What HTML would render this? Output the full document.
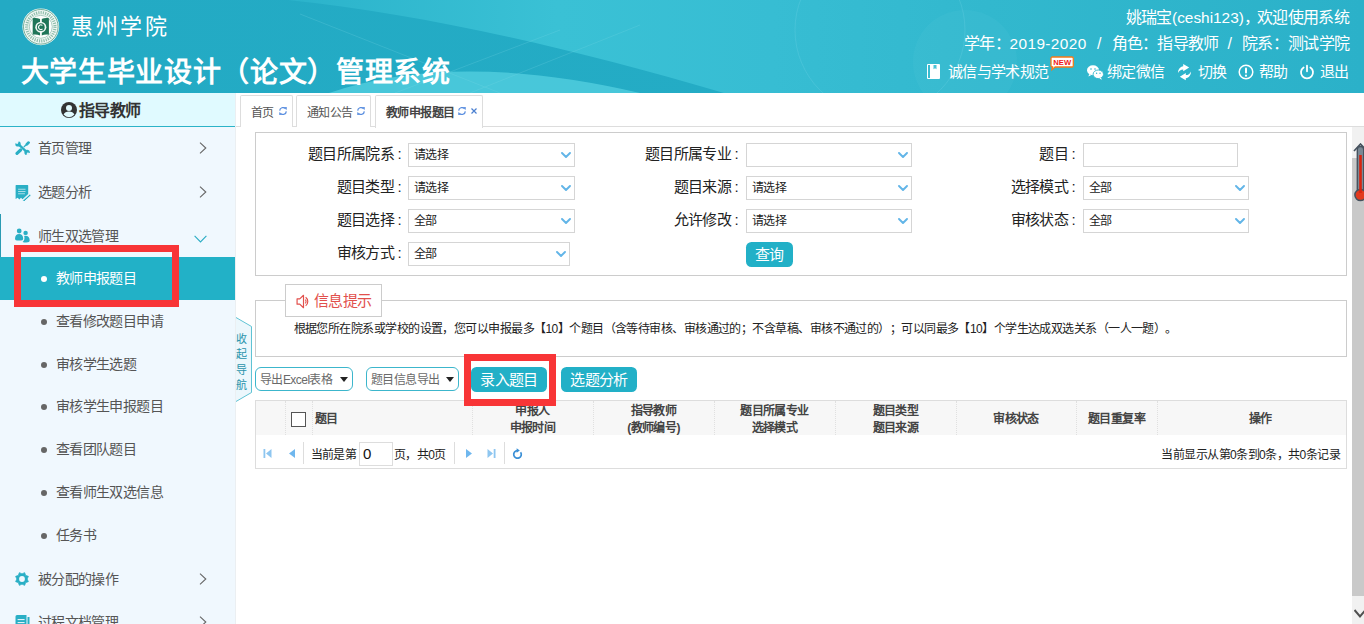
<!DOCTYPE html>
<html lang="zh-CN">
<head>
<meta charset="utf-8">
<title>大学生毕业设计(论文)管理系统</title>
<style>
*{box-sizing:border-box;margin:0;padding:0}
html,body{width:1364px;height:624px;overflow:hidden;background:#fff}
body{font-family:"Liberation Sans",sans-serif;font-size:12px;color:#333;position:relative;text-spacing-trim:space-all;font-kerning:none}
.abs{position:absolute}
/* header */
#hd{position:absolute;left:0;top:0;width:1364px;height:93px;overflow:hidden;
 background:linear-gradient(90deg,#23aac4 0%,#24acc5 60%,#27aec7 100%)}
#hd .wave{position:absolute}
#logo{position:absolute;left:22.2px;top:8.4px;width:37.6px;height:37.6px}
#school{position:absolute;left:71px;top:13px;font-family:"Liberation Serif",serif;font-size:22px;line-height:28px;letter-spacing:2.6px;color:#fff;white-space:nowrap}
#title{position:absolute;left:20.5px;top:54px;font-size:28px;line-height:37px;font-weight:bold;color:#fff;white-space:nowrap;letter-spacing:0.68px}
.hr{position:absolute;right:15px;color:#fff;white-space:nowrap;text-align:right}
.hl{position:absolute;left:0;width:1364px;height:20px;letter-spacing:-.7px;font-size:16px;line-height:20px;color:#fff;white-space:nowrap}
#h3{position:absolute;left:0;top:0;width:1364px;height:93px;color:#fff}
.ht{top:61px;letter-spacing:-.7px;font-size:15px;line-height:22px;white-space:nowrap;color:#fff}
/* sidebar */
#side{position:absolute;left:0;top:93px;width:236px;height:531px;background:#f0f8fe;overflow:hidden;border-right:1px solid #ebeff2}
#sidehd{position:absolute;left:0;top:0;width:236px;height:34px;background:#e0faff;border-bottom:1px solid #2bb3c8;border-right:1px solid #2bb3c8;letter-spacing:-.7px;font-size:16px;font-weight:bold;color:#333;line-height:35px;white-space:nowrap}
.mi{position:absolute;left:0;width:235px;height:44px;line-height:44px;letter-spacing:-.64px;font-size:14px;color:#555;white-space:nowrap}
.mi .t{position:absolute;left:38px;top:0}
.mi svg.ic{position:absolute;left:14px;top:14px}
.mi svg.ar{position:absolute;left:199px;top:16px}
.si{position:absolute;left:0;width:235px;height:43px;line-height:43px;letter-spacing:-.64px;font-size:14px;color:#555;white-space:nowrap}
.si .t{position:absolute;left:56px;top:0}
.si .d{position:absolute;left:41px;top:19px;width:6px;height:6px;border-radius:50%;background:#666}
.si.on{background:#22b1c7;color:#fff}
.si.on .d{background:#fff}
/* tabs */
#tabs{position:absolute;left:236px;top:93px;width:1128px;height:34px;background:#fff;border-bottom:1px solid #ddd}
.tab{position:absolute;top:2px;height:32px;border:1px solid #ddd;border-bottom:none;background:#fff;letter-spacing:-.55px;font-size:12px;line-height:32px;color:#555;white-space:nowrap;border-radius:2px 2px 0 0}
.tab.on{height:33px;font-weight:bold;color:#444}
.tab .t{position:absolute;left:10px;top:1px}
.rf{position:absolute;top:11px}
/* red boxes */
.red{position:absolute;border:7px solid #f83537}
/* form */
#fbox{position:absolute;left:255px;top:132px;width:1092px;height:144px;border:1px solid #ccc;background:#fff}
.lb{position:absolute;letter-spacing:-.7px;font-size:15px;line-height:20px;color:#222;text-align:right;white-space:nowrap;width:160px}
.lb i{font-style:normal;margin-left:3.6px}
.sel{position:absolute;height:24px;border:1px solid #d5d5d5;background:#fff;letter-spacing:-.55px;font-size:12px;line-height:22px;color:#222;padding-left:5px;white-space:nowrap}
.sel svg{position:absolute;right:3px;top:8px}
.btn{position:absolute;background:#22b0c7;color:#fff;letter-spacing:-.7px;font-size:15px;text-align:center;border-radius:5.5px;white-space:nowrap}
/* info */
#ibox{position:absolute;left:255px;top:300px;width:1092px;height:57px;border:1px solid #ccc}
#ileg{position:absolute;left:285px;top:284px;width:97px;height:32.5px;border:1px solid #ccc;background:#fff;letter-spacing:-.7px;font-size:15px;line-height:31px;color:#e2504c;white-space:nowrap}
#itxt{position:absolute;left:293.6px;top:321px;font-size:12px;line-height:16px;color:#222;white-space:nowrap;letter-spacing:-.55px}
/* toolbar */
.dd{position:absolute;height:24px;border:1px solid #3cb6cc;border-radius:6px;background:#fff;letter-spacing:-.55px;font-size:12px;line-height:24px;color:#6a6a6a;padding-left:4px;white-space:nowrap}
.dd i{position:absolute;right:4px;top:9px;width:0;height:0;border-left:4px solid transparent;border-right:4px solid transparent;border-top:5px solid #222}
/* table */
#thd{position:absolute;left:255px;top:400px;width:1092px;height:35px;background:#f7f7f7;border:1px solid #ddd;border-bottom:none}
.th{position:absolute;top:0;height:34px;letter-spacing:-.55px;font-size:12px;font-weight:bold;color:#444;text-align:center;line-height:17px;white-space:nowrap}
.th.one{line-height:37.5px}
.vl{position:absolute;top:0;width:0;height:34px;border-left:1px dotted #e0e0e0}
#pg{position:absolute;left:255px;top:435px;width:1092px;height:34px;border:1px solid #ddd;border-top:none;background:#fff;letter-spacing:-.55px;font-size:12px;color:#222;line-height:40px;white-space:nowrap}

.cb{position:absolute;left:35px;top:11px;width:14.5px;height:15px;border:1px solid #555;background:#fff}
.ps{position:absolute;top:7px;width:1px;height:22px;background:#ddd}
.pin{position:absolute;left:103px;top:7px;width:34px;height:24px;border:1px solid #ddd;background:#fff;font-size:15px;line-height:22px;padding-left:3px;color:#111}
/* collapse */
#col{position:absolute;left:236px;top:317px}
#coltxt{position:absolute;left:236px;top:332px;width:11px;font-size:11px;line-height:15.4px;color:#2a93ab;text-align:center}
/* scrollbar */
#sb{position:absolute;left:1352px;top:127px;width:12px;height:497px;background:#f1f1f1}
#sbth{position:absolute;left:0;top:31px;width:12px;height:438px;background:#c9c9c9}
</style>
</head>
<body>
<div id="hd">
 <svg class="wave" style="left:0;top:0" width="1364" height="93" viewBox="0 0 1364 93">
  <defs><linearGradient id="wg" gradientUnits="userSpaceOnUse" x1="288" x2="1364" y1="0" y2="0"><stop offset="0" stop-color="#2bb3cb"/><stop offset="0.25" stop-color="#3ac1d5"/><stop offset="0.45" stop-color="#37bdd3"/><stop offset="0.65" stop-color="#32b8ce"/><stop offset="1" stop-color="#2bb1c9"/></linearGradient></defs>
  <path d="M288 0 C420 14 560 45 724 93 L1364 93 L1364 0 Z" fill="url(#wg)"/>
  <path d="M329 93 Q455 50 640 93 Z" fill="#4ccadb" opacity="0.9"/>
  <path d="M300 14 L500 93 M395 93 L560 30 M470 93 L640 25" stroke="#7fdcea" stroke-width="1" opacity="0.22" fill="none"/>
  <circle cx="965" cy="62" r="52" fill="#5fd0e0" opacity="0.12"/>
  <circle cx="880" cy="30" r="85" fill="none" stroke="#8fe0ec" stroke-width="1" opacity="0.18"/>
 </svg>
 <svg id="logo" viewBox="0 0 38 38">
  <circle cx="19" cy="19" r="18.6" fill="#f2f8f5"/>
  <circle cx="19" cy="19" r="17.5" fill="none" stroke="#3f8f72" stroke-width="0.7"/>
  <circle cx="19" cy="19" r="14.3" fill="none" stroke="#4c977c" stroke-width="3.2" stroke-dasharray="1.2 1.1" opacity="0.6"/>
  <circle cx="19" cy="19" r="11.6" fill="#fdfefd" stroke="#5aa088" stroke-width="0.5"/>
  <path d="M10.8 10.4c2.6-.5 5.2-.2 7.4.8v16.6c-2.2-1-4.8-1.3-7.4-.8z" fill="#1f7558"/>
  <path d="M27.2 10.4c-2.6-.5-5.2-.2-7.4.8v16.6c2.2-1 4.8-1.3 7.4-.8z" fill="#1f7558"/>
  <circle cx="19" cy="19.4" r="5.6" fill="#f2f8f5"/>
  <circle cx="19" cy="19.4" r="3.9" fill="#1f7558"/>
  <path d="M20.6 17.7a2.3 2.3 0 1 0 .1 3.3" fill="none" stroke="#f2f8f5" stroke-width="1.1"/>
  <rect x="18.2" y="11" width="1.6" height="4" fill="#f2f8f5"/>
  <rect x="18.2" y="24" width="1.6" height="4" fill="#f2f8f5"/>
 </svg>
 <div id="school">惠州学院</div>
 <div id="title">大学生毕业设计（论文）管理系统</div>
 <div class="hl" style="top:8px">
  <span class="abs" style="left:1125.5px">姚瑞宝</span><span class="abs" style="left:1172px;font-size:15.4px;letter-spacing:0">(ceshi123)</span><span class="abs" style="left:1244px">，</span><span class="abs" style="left:1257px">欢迎使用系统</span>
 </div>
 <div class="hl" style="top:34px">
  <span class="abs" style="left:964px">学年：</span><span class="abs" style="left:1009.5px;font-size:15.4px;letter-spacing:0.4px">2019-2020</span><span class="abs" style="left:1097px">/</span><span class="abs" style="left:1111.6px">角色：指导教师</span><span class="abs" style="left:1227.5px">/</span><span class="abs" style="left:1242px">院系：测试学院</span>
 </div>
 <div id="h3">
  <svg class="abs" style="left:927px;top:64px" width="13" height="15" viewBox="0 0 13 15"><path d="M0.5 0.5h12v14h-12z" fill="none" stroke="#fff" stroke-width="1"/><path d="M3 1h9v13H3z" fill="#fff"/><path d="M6.5 1v4.2l1.5-1 1.5 1V1z" fill="#4dc3d6"/></svg>
  <span class="abs ht" style="left:948px">诚信与学术规范</span>
  <svg class="abs" style="left:1050.4px;top:56.4px" width="24" height="15" viewBox="0 0 24 15"><path d="M2.3 1h19.7a1.3 1.3 0 0 1 1.3 1.3v7.4a1.3 1.3 0 0 1-1.3 1.3H5.2l-3.2 2.6.5-2.7A1.3 1.3 0 0 1 1 9.7V2.3A1.3 1.3 0 0 1 2.3 1z" fill="#fff" stroke="#f57a18" stroke-width="1.3"/><text x="12.2" y="9" font-family="Liberation Sans, sans-serif" font-size="7.6" font-weight="bold" fill="#f01818" text-anchor="middle">NEW</text></svg>
  <svg class="abs" style="left:1087px;top:65px" width="17" height="15" viewBox="0 0 17 15"><ellipse cx="6" cy="5.3" rx="6" ry="5" fill="#fff"/><path d="M2.2 9l-.8 2.6 3-1.6z" fill="#fff"/><ellipse cx="11.3" cy="9.3" rx="5.2" ry="4.3" fill="#fff" stroke="#2fb4cb" stroke-width="0.9"/><path d="M14 12.8l.9 2-2.6-1.2z" fill="#fff"/><circle cx="4" cy="4" r=".8" fill="#2fb4cb"/><circle cx="8" cy="4" r=".8" fill="#2fb4cb"/><circle cx="9.6" cy="8.2" r=".7" fill="#2fb4cb"/><circle cx="13" cy="8.2" r=".7" fill="#2fb4cb"/></svg>
  <span class="abs ht" style="left:1107px">绑定微信</span>
  <svg class="abs" style="left:1172px;top:60px" width="24" height="24" viewBox="0 0 24 24"><g fill="#fff"><path id="sw" d="M6 13C6 9.5 8 6.6 11.2 6.2L11.2 4.1L17.2 7.6L11.2 11.3L11.2 9.4C8.8 9.4 7 10.6 6 13Z"/><path d="M6 13C6 9.5 8 6.6 11.2 6.2L11.2 4.1L17.2 7.6L11.2 11.3L11.2 9.4C8.8 9.4 7 10.6 6 13Z" transform="rotate(180 12.5 12.2)"/></g></svg>
  <span class="abs ht" style="left:1198px">切换</span>
  <svg class="abs" style="left:1238px;top:64px" width="16" height="16" viewBox="0 0 16 16"><circle cx="8" cy="8" r="6.8" fill="none" stroke="#fff" stroke-width="1.5"/><rect x="7" y="3.6" width="2" height="6" rx="1" fill="#fff"/><circle cx="8" cy="11.7" r="1.1" fill="#fff"/></svg>
  <span class="abs ht" style="left:1259px">帮助</span>
  <svg class="abs" style="left:1299px;top:64px" width="16" height="16" viewBox="0 0 16 16"><path d="M4.6 3.4A6 6 0 1 0 11.4 3.4" fill="none" stroke="#fff" stroke-width="1.8" stroke-linecap="round"/><rect x="7.1" y="0.8" width="1.8" height="7.4" rx=".9" fill="#fff"/></svg>
  <span class="abs ht" style="left:1320px">退出</span>
 </div>
</div>

<div id="side">
 <div id="sidehd"><svg class="abs" style="left:61px;top:9px" width="16" height="16" viewBox="0 0 16 16"><circle cx="8" cy="8" r="8" fill="#333"/><circle cx="8" cy="6" r="3" fill="#e1fafd"/><path d="M2.6 12.6c.8-2.2 2.8-3.2 5.4-3.2s4.6 1 5.4 3.2a7 7 0 0 1-10.8 0z" fill="#e1fafd"/></svg><span style="position:absolute;left:79px;top:0">指导教师</span></div>
 <i class="abs" style="left:0;top:121px;width:1px;height:43px;background:#2a9bb3"></i>
 <div class="mi" style="top:32.8px"><svg class="ic" style="left:15px;top:15px" width="16" height="15" viewBox="0 0 16 15"><path d="M3.6 3.4L11.6 10.8" stroke="#2aafc5" stroke-width="2.3" fill="none"/><circle cx="3" cy="2.9" r="2.7" fill="#2aafc5"/><path d="M-0.4 1.6L2.6 2.4 3.4 -0.6z" fill="#f0f8fe" stroke="#f0f8fe" stroke-width="1"/><circle cx="12.1" cy="11.4" r="2.7" fill="#2aafc5"/><path d="M15.4 12.8L12.5 11.9 11.7 15z" fill="#f0f8fe" stroke="#f0f8fe" stroke-width="1"/><path d="M2 12.4L5.6 9" stroke="#2aafc5" stroke-width="3.1" stroke-linecap="round" fill="none"/><path d="M8.8 6L11.8 3.2" stroke="#2aafc5" stroke-width="1.2" fill="none"/><path d="M11.9 3.2L13.6 1.6" stroke="#2aafc5" stroke-width="2.7" stroke-linecap="round" fill="none"/></svg><span class="t">首页管理</span><svg class="ar" width="8" height="12" viewBox="0 0 8 12"><path d="M1 0.6L6.8 6 1 11.4" fill="none" stroke="#666" stroke-width="1.1"/></svg></div>
 <div class="mi" style="top:77px"><svg class="ic" style="left:15px;top:15px" width="16" height="16" viewBox="0 0 16 16"><path d="M0.6 0h12a.6.6 0 0 1 .6.6v8.4l-5.7 5.2-1.5-1.4-1.7 1.6-1.6-1.6-2.1 1.2v-13.4a.6.6 0 0 1 .6-.6z" fill="#2aafc5"/><path d="M3.1 4.2h7.4M3.1 6.5h7.4M3.1 8.8h6.8" stroke="#a9dde8" stroke-width="1.1"/><path d="M7.6 15.6l7.2-6.6 1.3 1.4-7 6.4z" fill="#2aafc5" stroke="#f0f8fe" stroke-width=".9"/></svg><span class="t">选题分析</span><svg class="ar" width="8" height="12" viewBox="0 0 8 12"><path d="M1 0.6L6.8 6 1 11.4" fill="none" stroke="#666" stroke-width="1.1"/></svg></div>
 <div class="mi" style="top:121px"><svg class="ic" style="left:15px;top:14px" width="15" height="15" viewBox="0 0 15 15"><circle cx="4.2" cy="3" r="2.4" fill="#2aafc5"/><path d="M0 10.8c0-3.2 1.5-4.8 4.1-4.8s4.1 1.6 4.1 4.8c0 1.3-1 1.8-4.1 1.8s-4.1-.5-4.1-1.8z" fill="#2aafc5"/><circle cx="10.6" cy="4.9" r="2.2" fill="#2aafc5"/><path d="M9.2 7.9c3.6-.6 5.5 1.4 5.5 4.7 0 1.3-.9 1.9-3.6 1.9-1.5 0-2.7-.2-3.5-.6 1.7-1.4 2.3-3.4 1.6-6z" fill="#2aafc5"/></svg><span class="t">师生双选管理</span><svg class="ar" style="left:194px;top:21px" width="13" height="8" viewBox="0 0 13 8"><path d="M0.6 0.8L6.5 7 12.4 0.8" fill="none" stroke="#2badc4" stroke-width="1.1"/></svg></div>
 <div class="si on" style="top:164px"><i class="d"></i><span class="t">教师申报题目</span></div>
 <div class="si" style="top:206.8px"><i class="d"></i><span class="t">查看修改题目申请</span></div>
 <div class="si" style="top:249.5px"><i class="d"></i><span class="t">审核学生选题</span></div>
 <div class="si" style="top:292.2px"><i class="d"></i><span class="t">审核学生申报题目</span></div>
 <div class="si" style="top:335px"><i class="d"></i><span class="t">查看团队题目</span></div>
 <div class="si" style="top:377.8px"><i class="d"></i><span class="t">查看师生双选信息</span></div>
 <div class="si" style="top:420.5px"><i class="d"></i><span class="t">任务书</span></div>
 <div class="mi" style="top:463.8px"><svg class="ic" style="left:15px;top:15px" width="14" height="14" viewBox="0 0 14 14"><polygon points="9.64,0.63 10.61,3.39 13.37,4.36 12.1,7 13.37,9.64 10.61,10.61 9.64,13.37 7,12.1 4.36,13.37 3.39,10.61 0.63,9.64 1.9,7 0.63,4.36 3.39,3.39 4.36,0.63 7,1.9" fill="#2aafc5" stroke="#2aafc5" stroke-width=".8" stroke-linejoin="round"/><circle cx="7" cy="7" r="2.9" fill="#f0f8fe"/></svg><span class="t">被分配的操作</span><svg class="ar" width="8" height="12" viewBox="0 0 8 12"><path d="M1 0.6L6.8 6 1 11.4" fill="none" stroke="#666" stroke-width="1.1"/></svg></div>
 <div class="mi" style="top:507px"><svg class="ic" style="left:15px;top:15px" width="15" height="14" viewBox="0 0 15 14"><path d="M0.5 1.5a1.5 1.5 0 0 1 1.5-1.5h9.5v14h-11z" fill="#2aafc5"/><path d="M12.5 2h2v12h-2z" fill="#2aafc5"/><path d="M2.6 4.6h7M2.6 7.6h7" stroke="#f0f8fe" stroke-width="1"/></svg><span class="t">过程文档管理</span><svg class="ar" width="8" height="12" viewBox="0 0 8 12"><path d="M1 0.6L6.8 6 1 11.4" fill="none" stroke="#666" stroke-width="1.1"/></svg></div>
</div>

<div id="tabs">
 <div class="tab" style="left:4px;width:53px"><span class="t">首页</span><svg class="rf" style="left:38px" width="8" height="8" viewBox="0 0 8 8"><path d="M0.7 3.6A3.3 3.3 0 0 1 6.4 1.6" fill="none" stroke="#5b8fe0" stroke-width="1.3"/><path d="M5 0l3 .2-.6 3z" fill="#5b8fe0"/><path d="M7.3 4.4A3.3 3.3 0 0 1 1.6 6.4" fill="none" stroke="#5b8fe0" stroke-width="1.3"/><path d="M3 8l-3-.2.6-3z" fill="#5b8fe0"/></svg></div>
 <div class="tab" style="left:60px;width:75px"><span class="t">通知公告</span><svg class="rf" style="left:60px" width="8" height="8" viewBox="0 0 8 8"><path d="M0.7 3.6A3.3 3.3 0 0 1 6.4 1.6" fill="none" stroke="#5b8fe0" stroke-width="1.3"/><path d="M5 0l3 .2-.6 3z" fill="#5b8fe0"/><path d="M7.3 4.4A3.3 3.3 0 0 1 1.6 6.4" fill="none" stroke="#5b8fe0" stroke-width="1.3"/><path d="M3 8l-3-.2.6-3z" fill="#5b8fe0"/></svg></div>
 <div class="tab on" style="left:139px;width:108px"><span class="t">教师申报题目</span><svg class="rf" style="left:82px" width="8" height="8" viewBox="0 0 8 8"><path d="M0.7 3.6A3.3 3.3 0 0 1 6.4 1.6" fill="none" stroke="#5b8fe0" stroke-width="1.3"/><path d="M5 0l3 .2-.6 3z" fill="#5b8fe0"/><path d="M7.3 4.4A3.3 3.3 0 0 1 1.6 6.4" fill="none" stroke="#5b8fe0" stroke-width="1.3"/><path d="M3 8l-3-.2.6-3z" fill="#5b8fe0"/></svg><svg class="rf" style="left:95px;top:12px" width="6" height="6" viewBox="0 0 6 6"><path d="M0.5 0.5l5 5M5.5 0.5l-5 5" stroke="#4a7fd0" stroke-width="1.2"/></svg></div>
</div>

<div id="fbox"></div>
<div class="lb" style="left:241px;top:144px">题目所属院系<i>:</i></div>
<div class="sel" style="left:408px;top:143px;width:167px">请选择<svg width="10" height="6" viewBox="0 0 10 6"><path d="M1 1l4 4 4-4" fill="none" stroke="#62b5e8" stroke-width="1.9" stroke-linecap="round" stroke-linejoin="round"/></svg></div>
<div class="lb" style="left:241px;top:177px">题目类型<i>:</i></div>
<div class="sel" style="left:408px;top:176px;width:167px">请选择<svg width="10" height="6" viewBox="0 0 10 6"><path d="M1 1l4 4 4-4" fill="none" stroke="#62b5e8" stroke-width="1.9" stroke-linecap="round" stroke-linejoin="round"/></svg></div>
<div class="lb" style="left:241px;top:210px">题目选择<i>:</i></div>
<div class="sel" style="left:408px;top:209px;width:167px">全部<svg width="10" height="6" viewBox="0 0 10 6"><path d="M1 1l4 4 4-4" fill="none" stroke="#62b5e8" stroke-width="1.9" stroke-linecap="round" stroke-linejoin="round"/></svg></div>
<div class="lb" style="left:241px;top:243px">审核方式<i>:</i></div>
<div class="sel" style="left:408px;top:242px;width:162px">全部<svg width="10" height="6" viewBox="0 0 10 6"><path d="M1 1l4 4 4-4" fill="none" stroke="#62b5e8" stroke-width="1.9" stroke-linecap="round" stroke-linejoin="round"/></svg></div>
<div class="lb" style="left:578px;top:144px">题目所属专业<i>:</i></div>
<div class="sel" style="left:746px;top:143px;width:166px"><svg width="10" height="6" viewBox="0 0 10 6"><path d="M1 1l4 4 4-4" fill="none" stroke="#62b5e8" stroke-width="1.9" stroke-linecap="round" stroke-linejoin="round"/></svg></div>
<div class="lb" style="left:578px;top:177px">题目来源<i>:</i></div>
<div class="sel" style="left:746px;top:176px;width:166px">请选择<svg width="10" height="6" viewBox="0 0 10 6"><path d="M1 1l4 4 4-4" fill="none" stroke="#62b5e8" stroke-width="1.9" stroke-linecap="round" stroke-linejoin="round"/></svg></div>
<div class="lb" style="left:578px;top:210px">允许修改<i>:</i></div>
<div class="sel" style="left:746px;top:209px;width:166px">请选择<svg width="10" height="6" viewBox="0 0 10 6"><path d="M1 1l4 4 4-4" fill="none" stroke="#62b5e8" stroke-width="1.9" stroke-linecap="round" stroke-linejoin="round"/></svg></div>
<div class="lb" style="left:915px;top:144px">题目<i>:</i></div>
<div class="sel" style="left:1083px;top:143px;width:155px"></div>
<div class="lb" style="left:915px;top:177px">选择模式<i>:</i></div>
<div class="sel" style="left:1083px;top:176px;width:166px">全部<svg width="10" height="6" viewBox="0 0 10 6"><path d="M1 1l4 4 4-4" fill="none" stroke="#62b5e8" stroke-width="1.9" stroke-linecap="round" stroke-linejoin="round"/></svg></div>
<div class="lb" style="left:915px;top:210px">审核状态<i>:</i></div>
<div class="sel" style="left:1083px;top:209px;width:166px">全部<svg width="10" height="6" viewBox="0 0 10 6"><path d="M1 1l4 4 4-4" fill="none" stroke="#62b5e8" stroke-width="1.9" stroke-linecap="round" stroke-linejoin="round"/></svg></div>
<div class="btn" style="left:746px;top:242px;width:47px;height:25px;line-height:25px">查询</div>
<div id="ibox"></div>
<div id="ileg"><svg class="abs" style="left:10px;top:8.5px" width="15" height="15" viewBox="0 0 14 14"><path d="M1 4.5h2.5L7 1.2v11.6L3.5 9.5H1z" fill="none" stroke="#e2504c" stroke-width="1.1" stroke-linejoin="round"/><path d="M9 3a5 5 0 0 1 0 8" fill="none" stroke="#e2504c" stroke-width="1.1"/><path d="M8.6 5.2a2.4 2.4 0 0 1 0 3.6" fill="none" stroke="#e2504c" stroke-width="1"/></svg><span style="position:absolute;left:28px;top:0">信息提示</span></div>
<div id="itxt">根据您所在院系或学校的设置，您可以申报最多【10】个题目（含等待审核、审核通过的；不含草稿、审核不通过的）；可以同最多【10】个学生达成双选关系（一人一题）。</div>

<div class="dd" style="left:255px;top:367px;width:98px">导出Excel表格<i></i></div>
<div class="dd" style="left:366px;top:367px;width:93px">题目信息导出<i></i></div>
<div class="btn" style="left:471px;top:367px;width:76px;height:25px;line-height:25px">录入题目</div>
<div class="btn" style="left:561px;top:367px;width:76px;height:25px;line-height:25px">选题分析</div>
<div id="thd">
 <i class="vl" style="left:29px"></i>
 <i class="vl" style="left:56px"></i>
 <i class="vl" style="left:216px"></i>
 <i class="vl" style="left:337px"></i>
 <i class="vl" style="left:458px"></i>
 <i class="vl" style="left:579px"></i>
 <i class="vl" style="left:700px"></i>
 <i class="vl" style="left:820px"></i>
 <i class="vl" style="left:901px"></i>
 <i class="cb"></i>
 <div class="th one" style="left:59px;text-align:left">题目</div>
 <div class="th" style="left:216px;width:121px;padding-top:2.4px">申报人<br>申报时间</div>
 <div class="th" style="left:337px;width:121px;padding-top:2.4px">指导教师<br>(教师编号)</div>
 <div class="th" style="left:458px;width:121px;padding-top:2.4px">题目所属专业<br>选择模式</div>
 <div class="th" style="left:579px;width:121px;padding-top:2.4px">题目类型<br>题目来源</div>
 <div class="th one" style="left:700px;width:120px">审核状态</div>
 <div class="th one" style="left:820px;width:81px">题目重复率</div>
 <div class="th one" style="left:901px;width:206px">操作</div>
</div>
<div id="pg">
 <svg class="abs" style="left:7px;top:14px" width="9" height="9" viewBox="0 0 9 9"><rect x="0.5" y="0" width="1.8" height="9" fill="#8ec6f0"/><path d="M8.5 0v9L3 4.5z" fill="#8ec6f0"/></svg>
 <svg class="abs" style="left:32px;top:14px" width="8" height="9" viewBox="0 0 8 9"><path d="M7 0v9L1 4.5z" fill="#6fb7ee"/></svg>
 <i class="ps" style="left:47px"></i>
 <span class="abs" style="left:54.5px;top:0">当前是第</span>
 <span class="pin">0</span>
 <span class="abs" style="left:138px;top:0">页，共0页</span>
 <i class="ps" style="left:198px"></i>
 <svg class="abs" style="left:209px;top:14px" width="8" height="9" viewBox="0 0 8 9"><path d="M1 0v9L7 4.5z" fill="#6fb7ee"/></svg>
 <svg class="abs" style="left:231px;top:14px" width="9" height="9" viewBox="0 0 9 9"><rect x="6.7" y="0" width="1.8" height="9" fill="#8ec6f0"/><path d="M0.5 0v9L6 4.5z" fill="#8ec6f0"/></svg>
 <i class="ps" style="left:248px"></i>
 <svg class="abs" style="left:256px;top:13px" width="11" height="12" viewBox="0 0 11 12"><path d="M8.6 4.2A3.8 3.8 0 1 1 5.5 2.6" fill="none" stroke="#3a8fd6" stroke-width="1.7"/><path d="M4.6 0.2l3.2 2.3-3.2 2.3z" fill="#3a8fd6"/></svg>
 <span class="abs" style="right:6px;top:0">当前显示从第0条到0条，共0条记录</span>
</div>

<svg id="col" viewBox="0 0 17 86" width="17" height="86"><path d="M0 0.5L15.5 9.5V75.5L0 84.5z" fill="#ecf7fc"/><path d="M0 0.5L15.5 9.5V75.5L0 84.5" fill="none" stroke="#5fc3d4" stroke-width="1"/></svg>
<div id="coltxt">收<br>起<br>导<br>航</div>
<div id="sb"><div id="sbth"></div>
 <svg class="abs" style="left:2px;top:482px" width="10" height="10" viewBox="0 0 10 10"><path d="M0.5 1L6 7.5 11.5 1" fill="none" stroke="#505050" stroke-width="2"/></svg>
</div>
<svg class="abs" style="left:1353px;top:143px" width="11" height="59" viewBox="0 0 11 59"><path d="M1 8L7.5 1 14 8" fill="none" stroke="#46525e" stroke-width="1.6"/><rect x="4.3" y="3.5" width="6.4" height="46" rx="3" fill="#7a8894" stroke="#46525e" stroke-width="1.4"/><circle cx="7.5" cy="52" r="5.6" fill="#e23a1e" stroke="#46525e" stroke-width="1.5"/><rect x="6.2" y="12" width="2.6" height="38" fill="#d8240f"/></svg>

<div class="red" style="left:13.5px;top:244.5px;width:165px;height:62px"></div>
<div class="red" style="left:463.7px;top:353.5px;width:92.8px;height:52px"></div>
</body>
</html>
